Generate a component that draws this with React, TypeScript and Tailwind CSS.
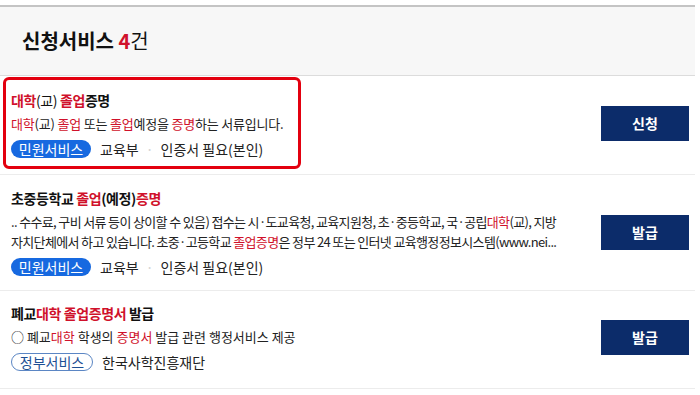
import React from "react";

const R = ({ children }: { children: React.ReactNode }) => (
  <span className="text-[#d0112b]">{children}</span>
);

const Button = ({ label }: { label: string }) => (
  <button className="w-[88px] h-[35px] bg-[#0c2c6a] text-white text-[14px] font-bold shrink-0 mr-[6px]">
    {label}
  </button>
);

const Dot = () => <span className="text-[#d5d5d5] mx-[7px]">·</span>;

const FilledTag = ({ label }: { label: string }) => (
  <span className="inline-flex items-center justify-center w-[80px] h-[18px] rounded-full bg-[#1769e0] text-white text-[14px] leading-none mr-[9px]">
    {label}
  </span>
);

const OutlineTag = ({ label }: { label: string }) => (
  <span className="inline-flex items-center justify-center w-[82px] h-[18px] rounded-full border border-[#5b86c4] text-[#1d4f94] text-[14px] leading-none mr-[9px]">
    {label}
  </span>
);

export default function App() {
  return (
    <div
      className="w-[700px] h-[395px] bg-white pt-[5px] overflow-hidden text-[#222]"
      style={{ fontFamily: '"Noto Sans CJK KR", "Noto Sans", sans-serif' }}
    >
      <div className="w-[695px]">
        <div className="h-[71px] bg-[#f7f7f7] border-t-2 border-[#c4c4c4] border-b border-b-[#dcdcdc] flex items-center pl-[22px]">
          <h2 className="text-[20px] font-bold text-[#111]">
            신청서비스 <span className="text-[#d0112b]">4</span>
            <span className="font-normal">건</span>
          </h2>
        </div>

        {/* item 1 */}
        <div className="flex items-center justify-between border-b border-[#ececec] pt-[1px] pb-[5px] pl-[3px]">
          <div className="w-[298px] border-[3px] border-[#e3000f] rounded-[6px] pl-[5px] pt-[11px] pb-[8px]">
            <div className="text-[14px] leading-[18px] font-bold text-[#111] tracking-[-0.4px]">
              <R>대학</R>
              <span className="font-normal">(교)</span> <R>졸업</R>증명
            </div>
            <div className="mt-[5px] text-[13px] leading-[20px] tracking-[-0.2px] whitespace-nowrap">
              <R>대학</R>(교) <R>졸업</R> 또는 <R>졸업</R>예정을 <R>증명</R>하는 서류입니다.
            </div>
            <div className="mt-[6px] h-[18px] flex items-center text-[14px] leading-[18px]">
              <FilledTag label="민원서비스" />
              교육부
              <Dot />
              인증서 필요(본인)
            </div>
          </div>
          <Button label="신청" />
        </div>

        {/* item 2 */}
        <div className="flex items-center justify-between border-b border-[#ececec] pt-[14px] pb-[14px] pl-[11px]">
          <div>
            <div className="text-[14px] leading-[18px] font-bold text-[#111] tracking-[-0.4px]">
              초중등학교 <R>졸업</R>(예정)<R>증명</R>
            </div>
            <div className="mt-[5px] text-[13px] leading-[20px] tracking-[-0.65px] whitespace-nowrap">
              <div>
                .. 수수료, 구비 서류 등이 상이할 수 있음) 접수는 시·도교육청, 교육지원청, 초·중등학교, 국·공립<R>대학</R>(교), 지방
              </div>
              <div>
                자치단체에서 하고 있습니다. 초중·고등학교 <R>졸업증명</R>은 정부 24 또는 인터넷 교육행정정보시스템(www.nei...
              </div>
            </div>
            <div className="mt-[6px] h-[18px] flex items-center text-[14px] leading-[18px]">
              <FilledTag label="민원서비스" />
              교육부
              <Dot />
              인증서 필요(본인)
            </div>
          </div>
          <Button label="발급" />
        </div>

        {/* item 3 */}
        <div className="flex items-center justify-between border-b border-[#ececec] pt-[13px] pb-[17px] pl-[11px]">
          <div>
            <div className="text-[14px] leading-[18px] font-bold text-[#111] tracking-[-0.4px]">
              폐교<R>대학 졸업증명서</R> 발급
            </div>
            <div className="mt-[5px] text-[13px] leading-[20px] whitespace-nowrap">
              ○ 폐교<R>대학</R> 학생의 <R>증명서</R> 발급 관련 행정서비스 제공
            </div>
            <div className="mt-[6px] h-[18px] flex items-center text-[14px] leading-[18px]">
              <OutlineTag label="정부서비스" />
              한국사학진흥재단
            </div>
          </div>
          <Button label="발급" />
        </div>
      </div>
    </div>
  );
}
